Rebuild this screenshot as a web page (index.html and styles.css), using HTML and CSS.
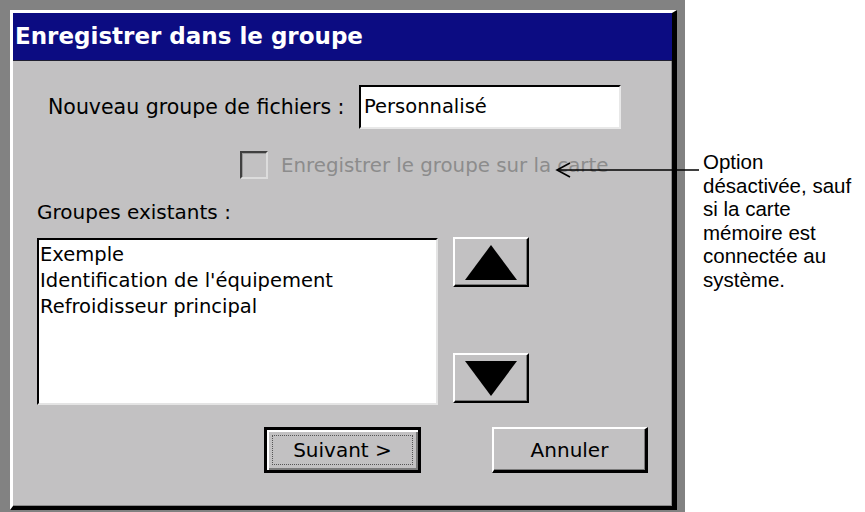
FILE: index.html
```html
<!DOCTYPE html>
<html lang="fr">
<head>
<meta charset="utf-8">
<title>Enregistrer dans le groupe</title>
<link rel="stylesheet" href="styles.css">
</head>
<body>
<div class="page">
  <div class="frame">
    <div class="dialog">
      <div class="titlebar">Enregistrer dans le groupe</div>
      <div class="content">
        <div class="row-name">
          <span class="label">Nouveau groupe de fichiers :</span>
          <div class="input">Personnalisé</div>
        </div>
        <div class="row-check">
          <span class="checkbox"></span>
          <span class="check-label">Enregistrer le groupe sur la carte</span>
        </div>
        <div class="row-title">Groupes existants :</div>
        <div class="row-list">
          <div class="listbox">
            <div class="item">Exemple</div>
            <div class="item">Identification de l'équipement</div>
            <div class="item">Refroidisseur principal</div>
          </div>
          <div class="arrows">
            <div class="arrow-btn">
              <svg width="52" height="35" viewBox="0 0 52 35"><polygon points="26,0 52,35 0,35" fill="#000"/></svg>
            </div>
            <div class="arrow-btn">
              <svg width="52" height="35" viewBox="0 0 52 35"><polygon points="0,0 52,0 26,35" fill="#000"/></svg>
            </div>
          </div>
        </div>
        <div class="row-buttons">
          <div class="btn btn-default"><span class="focus">Suivant &gt;</span></div>
          <div class="btn">Annuler</div>
        </div>
      </div>
    </div>
  </div>
  <div class="callout">Option<br>désactivée, sauf<br>si la carte<br>mémoire est<br>connectée au<br>système.</div>
</div>
<svg class="pointer" width="865" height="512" viewBox="0 0 865 512">
  <line x1="557" y1="170" x2="699" y2="170" stroke="#000" stroke-width="1.6"/>
  <polyline points="570,163 557,170 570,177" fill="none" stroke="#000" stroke-width="1.6"/>
</svg>
</body>
</html>
```
FILE: styles.css
```css
html, body {
  margin: 0;
  padding: 0;
  background: #ffffff;
}
.page {
  display: flex;
  width: 865px;
  height: 512px;
}
.frame {
  width: 685px;
  height: 512px;
  box-sizing: border-box;
  background: #828282;
  padding: 10px 8px 2px 10px;
}
.dialog {
  width: 667px;
  height: 500px;
  box-sizing: border-box;
  background: #c2c1c2;
  border-top: 3px solid #ffffff;
  border-left: 3px solid #ffffff;
  border-right: 5px solid #000000;
  border-bottom: 4px solid #000000;
  box-shadow: inset -1px -1px 0 #8a8a8a;
  display: flex;
  flex-direction: column;
  font-family: "DejaVu Sans", Verdana, sans-serif;
  color: #000;
}
.titlebar {
  height: 47px;
  background: #0c0c82;
  border-bottom: 1px solid #202030;
  color: #ffffff;
  font-weight: bold;
  font-size: 23px;
  line-height: 47px;
  padding-left: 2px;
  white-space: nowrap;
}
.content {
  display: flex;
  flex-direction: column;
}
.row-name {
  display: flex;
  align-items: center;
  margin-top: 24px;
  height: 44px;
  padding-left: 35px;
  padding-right: 51px;
  font-size: 20.5px;
}
.label {
  white-space: nowrap;
}
.input {
  margin-left: auto;
  width: 262px;
  height: 44px;
  box-sizing: border-box;
  background: #ffffff;
  border-top: 2px solid #000000;
  border-left: 2px solid #000000;
  border-right: 2px solid #e8e8e8;
  border-bottom: 2px solid #e8e8e8;
  padding-left: 3px;
  line-height: 40px;
  font-size: 19.5px;
}
.row-check {
  display: flex;
  align-items: center;
  margin-top: 21px;
  height: 30px;
  padding-left: 227px;
  gap: 13px;
}
.checkbox {
  width: 28px;
  height: 28px;
  box-sizing: border-box;
  border-top: 2px solid #404040;
  border-left: 2px solid #404040;
  border-right: 2px solid #dcdcdc;
  border-bottom: 2px solid #dcdcdc;
  box-shadow: inset 1px 1px 0 #9a9a9a;
}
.check-label {
  color: #8c8c8c;
  font-size: 19.8px;
  white-space: nowrap;
}
.row-title {
  margin-top: 20px;
  padding-left: 24px;
  font-size: 20px;
  line-height: 24px;
}
.row-list {
  display: flex;
  margin-top: 13px;
  padding-left: 24px;
  gap: 15px;
}
.listbox {
  margin-top: 1px;
  width: 401px;
  height: 167px;
  box-sizing: border-box;
  background: #ffffff;
  border-top: 2px solid #000000;
  border-left: 2px solid #000000;
  border-right: 2px solid #e4e4e4;
  border-bottom: 2px solid #e4e4e4;
  padding: 2px 0 0 1px;
  font-size: 19.5px;
  line-height: 26px;
}
.item {
  white-space: nowrap;
}
.arrows {
  display: flex;
  flex-direction: column;
  justify-content: space-between;
  height: 166px;
}
.arrow-btn {
  width: 76px;
  height: 50px;
  box-sizing: border-box;
  border-top: 2px solid #ffffff;
  border-left: 2px solid #ffffff;
  border-right: 2px solid #000000;
  border-bottom: 2px solid #000000;
  box-shadow: inset -1px -1px 0 #7a7a7a;
  display: flex;
  align-items: center;
  justify-content: center;
}
.arrow-btn svg {
  display: block;
}
.row-buttons {
  display: flex;
  margin-top: 22px;
  padding-left: 251px;
  gap: 71px;
}
.btn {
  width: 156px;
  height: 46px;
  box-sizing: border-box;
  border-top: 2px solid #ffffff;
  border-left: 2px solid #ffffff;
  border-right: 3px solid #000000;
  border-bottom: 3px solid #000000;
  box-shadow: inset -1px -1px 0 #7a7a7a;
  display: flex;
  align-items: center;
  justify-content: center;
  font-size: 20px;
}
.btn-default {
  width: 157px;
  border: 3px solid #000000;
  box-shadow: inset 2px 2px 0 #ffffff, inset -2px -2px 0 #7a7a7a;
  padding: 5px;
}
.focus {
  flex: 1;
  align-self: stretch;
  display: flex;
  align-items: center;
  justify-content: center;
  border: 1px dotted #555555;
}
.callout {
  padding-top: 150px;
  padding-left: 18px;
  font-family: "Liberation Sans", Arial, sans-serif;
  font-size: 20.5px;
  line-height: 23.5px;
  color: #000;
  white-space: nowrap;
}
.pointer {
  position: absolute;
  left: 0;
  top: 0;
  pointer-events: none;
}
```
